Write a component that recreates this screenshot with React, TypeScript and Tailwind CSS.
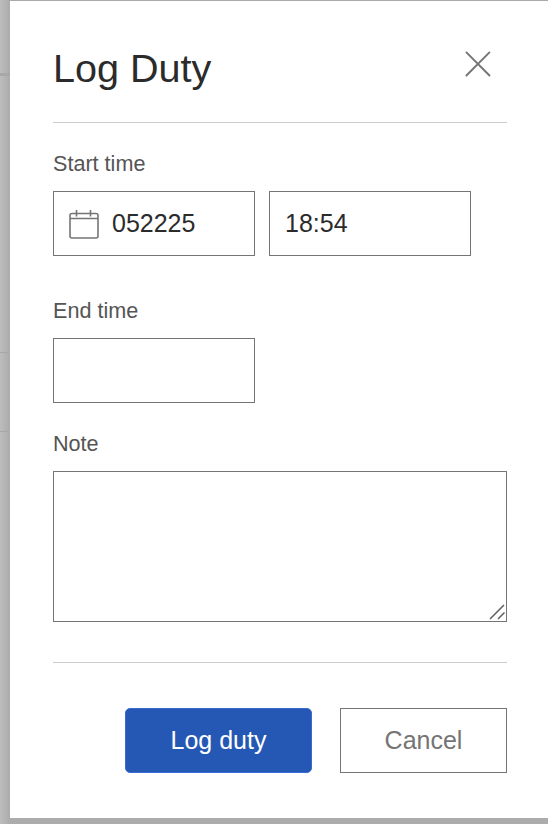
export default function App() {
  const labelCls = "block h-[24px] text-[21.6px] leading-[24px] text-[#555555]";
  const boxCls = "h-[65px] w-[202px] border border-[#757575] bg-white text-[25px] leading-[63px] text-[#2b2b2b]";
  return (
    <div className="flex h-[824px] w-[548px] overflow-hidden bg-[#acacac] font-['Liberation_Sans',Arial,sans-serif]">
      <div className="flex h-full w-[10px] flex-col bg-gradient-to-r from-[#bdbdbd] to-[#ababab]">
        <div className="h-[76px] border-b-[3px] border-[#a8a8a8]" />
        <div className="h-[277px] border-b border-[#a8a8a8]" />
        <div className="h-[79px] border-b border-[#a8a8a8]" />
      </div>
      <div className="flex h-full flex-1 flex-col">
        <div className="h-px bg-[#aaaaaa]" />
        <div className="flex h-[817px] flex-col bg-white pl-[43px] pr-[41px]">
          <div className="flex h-[122px] items-start justify-between border-b border-[#cccccc]">
            <h1 className="mt-[41px] text-[39.6px] leading-[52px] font-normal text-[#2b2b2b]">Log Duty</h1>
            <button className="mr-[15px] mt-[49px] text-[#757575]">
              <svg width="28" height="28" viewBox="0 0 28 28" fill="none" stroke="currentColor" strokeWidth="2" strokeLinecap="round">
                <path d="M2 2 L26 26 M26 2 L2 26" transform="translate(0.5 0.5) scale(0.96)" />
              </svg>
            </button>
          </div>
          <label className={`mt-[29px] ${labelCls}`}>Start time</label>
          <div className="mt-[15px] flex gap-[14px]">
            <div className={`flex items-center ${boxCls}`}>
              <svg className="ml-[15px] mr-[13px] shrink-0" width="30" height="30" viewBox="0 0 30 30" fill="none" stroke="#757575" strokeWidth="1.6">
                <rect x="1" y="4.5" width="28" height="24.5" rx="2" />
                <path d="M1 9.5 H29 M7.5 1 V7.5 M21.5 1 V7.5" />
              </svg>
              <span>052225</span>
            </div>
            <div className={`pl-[15px] ${boxCls}`}>18:54</div>
          </div>
          <label className={`mt-[43px] ${labelCls}`}>End time</label>
          <div className={`mt-[15px] ${boxCls}`} />
          <label className={`mt-[29px] ${labelCls}`}>Note</label>
          <div className="relative mt-[15px] h-[151px] w-[454px] border border-[#757575] bg-white">
            <svg className="absolute bottom-0 right-0" width="17" height="17" viewBox="0 0 17 17" fill="none" stroke="#5f5f5f" strokeWidth="1.5">
              <path d="M1 15 L15 1 M9 15 L15.5 8.5" />
            </svg>
          </div>
          <div className="mt-[40px] h-px bg-[#cccccc]" />
          <div className="mt-[45px] flex justify-end gap-[28px]">
            <button className="h-[65px] w-[187px] rounded-[5px] border border-[#3a6bd0] bg-[#2558b4] text-[25px] text-white">Log duty</button>
            <button className="h-[65px] w-[167px] border border-[#757575] bg-white text-[25px] text-[#757575]">Cancel</button>
          </div>
        </div>
      </div>
    </div>
  );
}
